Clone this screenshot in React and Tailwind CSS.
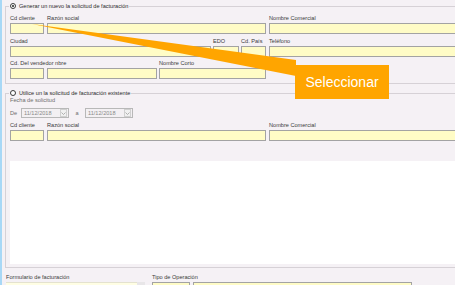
import React from 'react';

const Label = ({ children, className = '' }) => (
  <div className={`h-[7px] text-[5.6px] leading-[7px] whitespace-nowrap text-[#3a3a3a] ${className}`}>
    {children}
  </div>
);

const Field = ({ label, w }) => (
  <div className={`flex flex-col gap-[1px] shrink-0 ${w}`}>
    <Label>{label}</Label>
    <div className="h-[11px] border border-[#a3a3a3] bg-[#fffcc6]" />
  </div>
);

const Radio = ({ checked }) => (
  <span className="w-[6px] h-[6px] rounded-full border border-[#3a3a3a] bg-white flex items-center justify-center">
    {checked && <span className="w-[2px] h-[2px] rounded-full bg-[#222]" />}
  </span>
);

const DatePicker = () => (
  <div className="w-[48px] h-[10px] border border-[#b8b8b8] bg-[#f3f0f3] flex items-center">
    <span className="flex-1 pl-[2px] text-[5.6px] leading-[8px] text-[#8a8a8a]">11/12/2018</span>
    <span className="w-[7px] h-[8px] mr-[1px] border border-[#d0d0d0] bg-[#f0f0f0] flex items-center justify-center">
      <svg width="5" height="3" viewBox="0 0 5 3">
        <path d="M0.5 0.5 L2.5 2.5 L4.5 0.5" fill="none" stroke="#a0a0a0" strokeWidth="0.8" />
      </svg>
    </span>
  </div>
);

export default function App() {
  return (
    <div className="relative w-[455px] h-[285px] overflow-hidden bg-[#f5f1f5] border-l-2 border-[#a8d8f6] font-['Liberation_Sans',Arial,sans-serif]">
      {/* Nuevo */}
      <fieldset className="ml-[3px] mt-[2px] w-[480px] border border-[#d6d1d6] pl-[4px] pr-0 pt-0 pb-[4px]">
        <legend className="-ml-[1px] px-[1px] h-[8px] flex items-center gap-[3px] text-[5.6px] leading-[8px] text-[#2a2a2a]">
          <Radio checked />
          <span>Generar un nuevo la solicitud de facturación</span>
        </legend>
        <div className="flex mt-[5px]">
          <Field label="Cd cliente" w="w-[34px]" />
          <div className="w-[3px]" />
          <Field label="Razón social" w="w-[219px]" />
          <div className="w-[3px]" />
          <Field label="Nombre Comercial" w="w-[200px]" />
        </div>
        <div className="flex mt-[4px]">
          <Field label="Ciudad" w="w-[201px]" />
          <div className="w-[2px]" />
          <Field label="EDO" w="w-[26px]" />
          <div className="w-[2px]" />
          <Field label="Cd. País" w="w-[25px]" />
          <div className="w-[3px]" />
          <Field label="Teléfono" w="w-[200px]" />
        </div>
        <div className="flex mt-[3px]">
          <Field label="Cd. Del vendedor nbre" w="w-[34px]" />
          <div className="w-[3px]" />
          <Field label="" w="w-[110px]" />
          <div className="w-[2px]" />
          <Field label="Nombre Corto" w="w-[107px]" />
        </div>
      </fieldset>

      {/* Existente */}
      <fieldset className="ml-[3px] mt-[5px] w-[480px] border border-[#d6d1d6] pl-[4px] pr-0 pt-0 pb-[3px]">
        <legend className="-ml-[1px] px-[1px] h-[8px] flex items-center gap-[3px] text-[5.6px] leading-[8px] text-[#2a2a2a]">
          <Radio />
          <span>Utilice un la solicitud de facturación existente</span>
        </legend>
        <Label className="text-[#6e6e6e]">Fecha de solicitud</Label>
        <div className="flex items-center mt-[4px] h-[10px]">
          <span className="w-[11px] text-[5.6px] text-[#6e6e6e]">De</span>
          <DatePicker />
          <span className="w-[16px] text-center text-[5.6px] text-[#6e6e6e]">a</span>
          <DatePicker />
        </div>
        <div className="flex mt-[4px]">
          <Field label="Cd cliente" w="w-[34px]" />
          <div className="w-[3px]" />
          <Field label="Razón social" w="w-[219px]" />
          <div className="w-[3px]" />
          <Field label="Nombre Comercial" w="w-[200px]" />
        </div>
        <div className="mt-[20px] h-[103px] bg-white" />
      </fieldset>

      {/* Pie */}
      <div className="flex ml-[4px] mt-[6px]">
        <div className="flex flex-col gap-[1px] w-[139px]">
          <Label>Formulario de facturación</Label>
          <div className="flex h-[11px]">
            <div className="flex-1 border-t border-[#e4e2cf] bg-[#fffee4]" />
            <div className="w-[8px] bg-[#e8e6e8]" />
          </div>
        </div>
        <div className="w-[7px]" />
        <div className="flex flex-col gap-[1px]">
          <Label>Tipo de Operación</Label>
          <div className="flex gap-[3px]">
            <div className="w-[38px] h-[11px] border border-[#a3a3a3] bg-[#fffcc6]" />
            <div className="w-[219px] h-[11px] border border-[#a3a3a3] bg-[#fffcc6]" />
          </div>
        </div>
      </div>

      {/* Callout */}
      <svg className="absolute left-0 top-0" width="455" height="285" viewBox="0 0 455 285">
        <polygon points="30,24 294,60 294,76" fill="#ffa500" />
      </svg>
      <div className="absolute left-[293px] top-[65px] w-[94px] h-[34px] bg-[#ffa500] flex items-center justify-center text-[14px] text-white">
        Seleccionar
      </div>
    </div>
  );
}
